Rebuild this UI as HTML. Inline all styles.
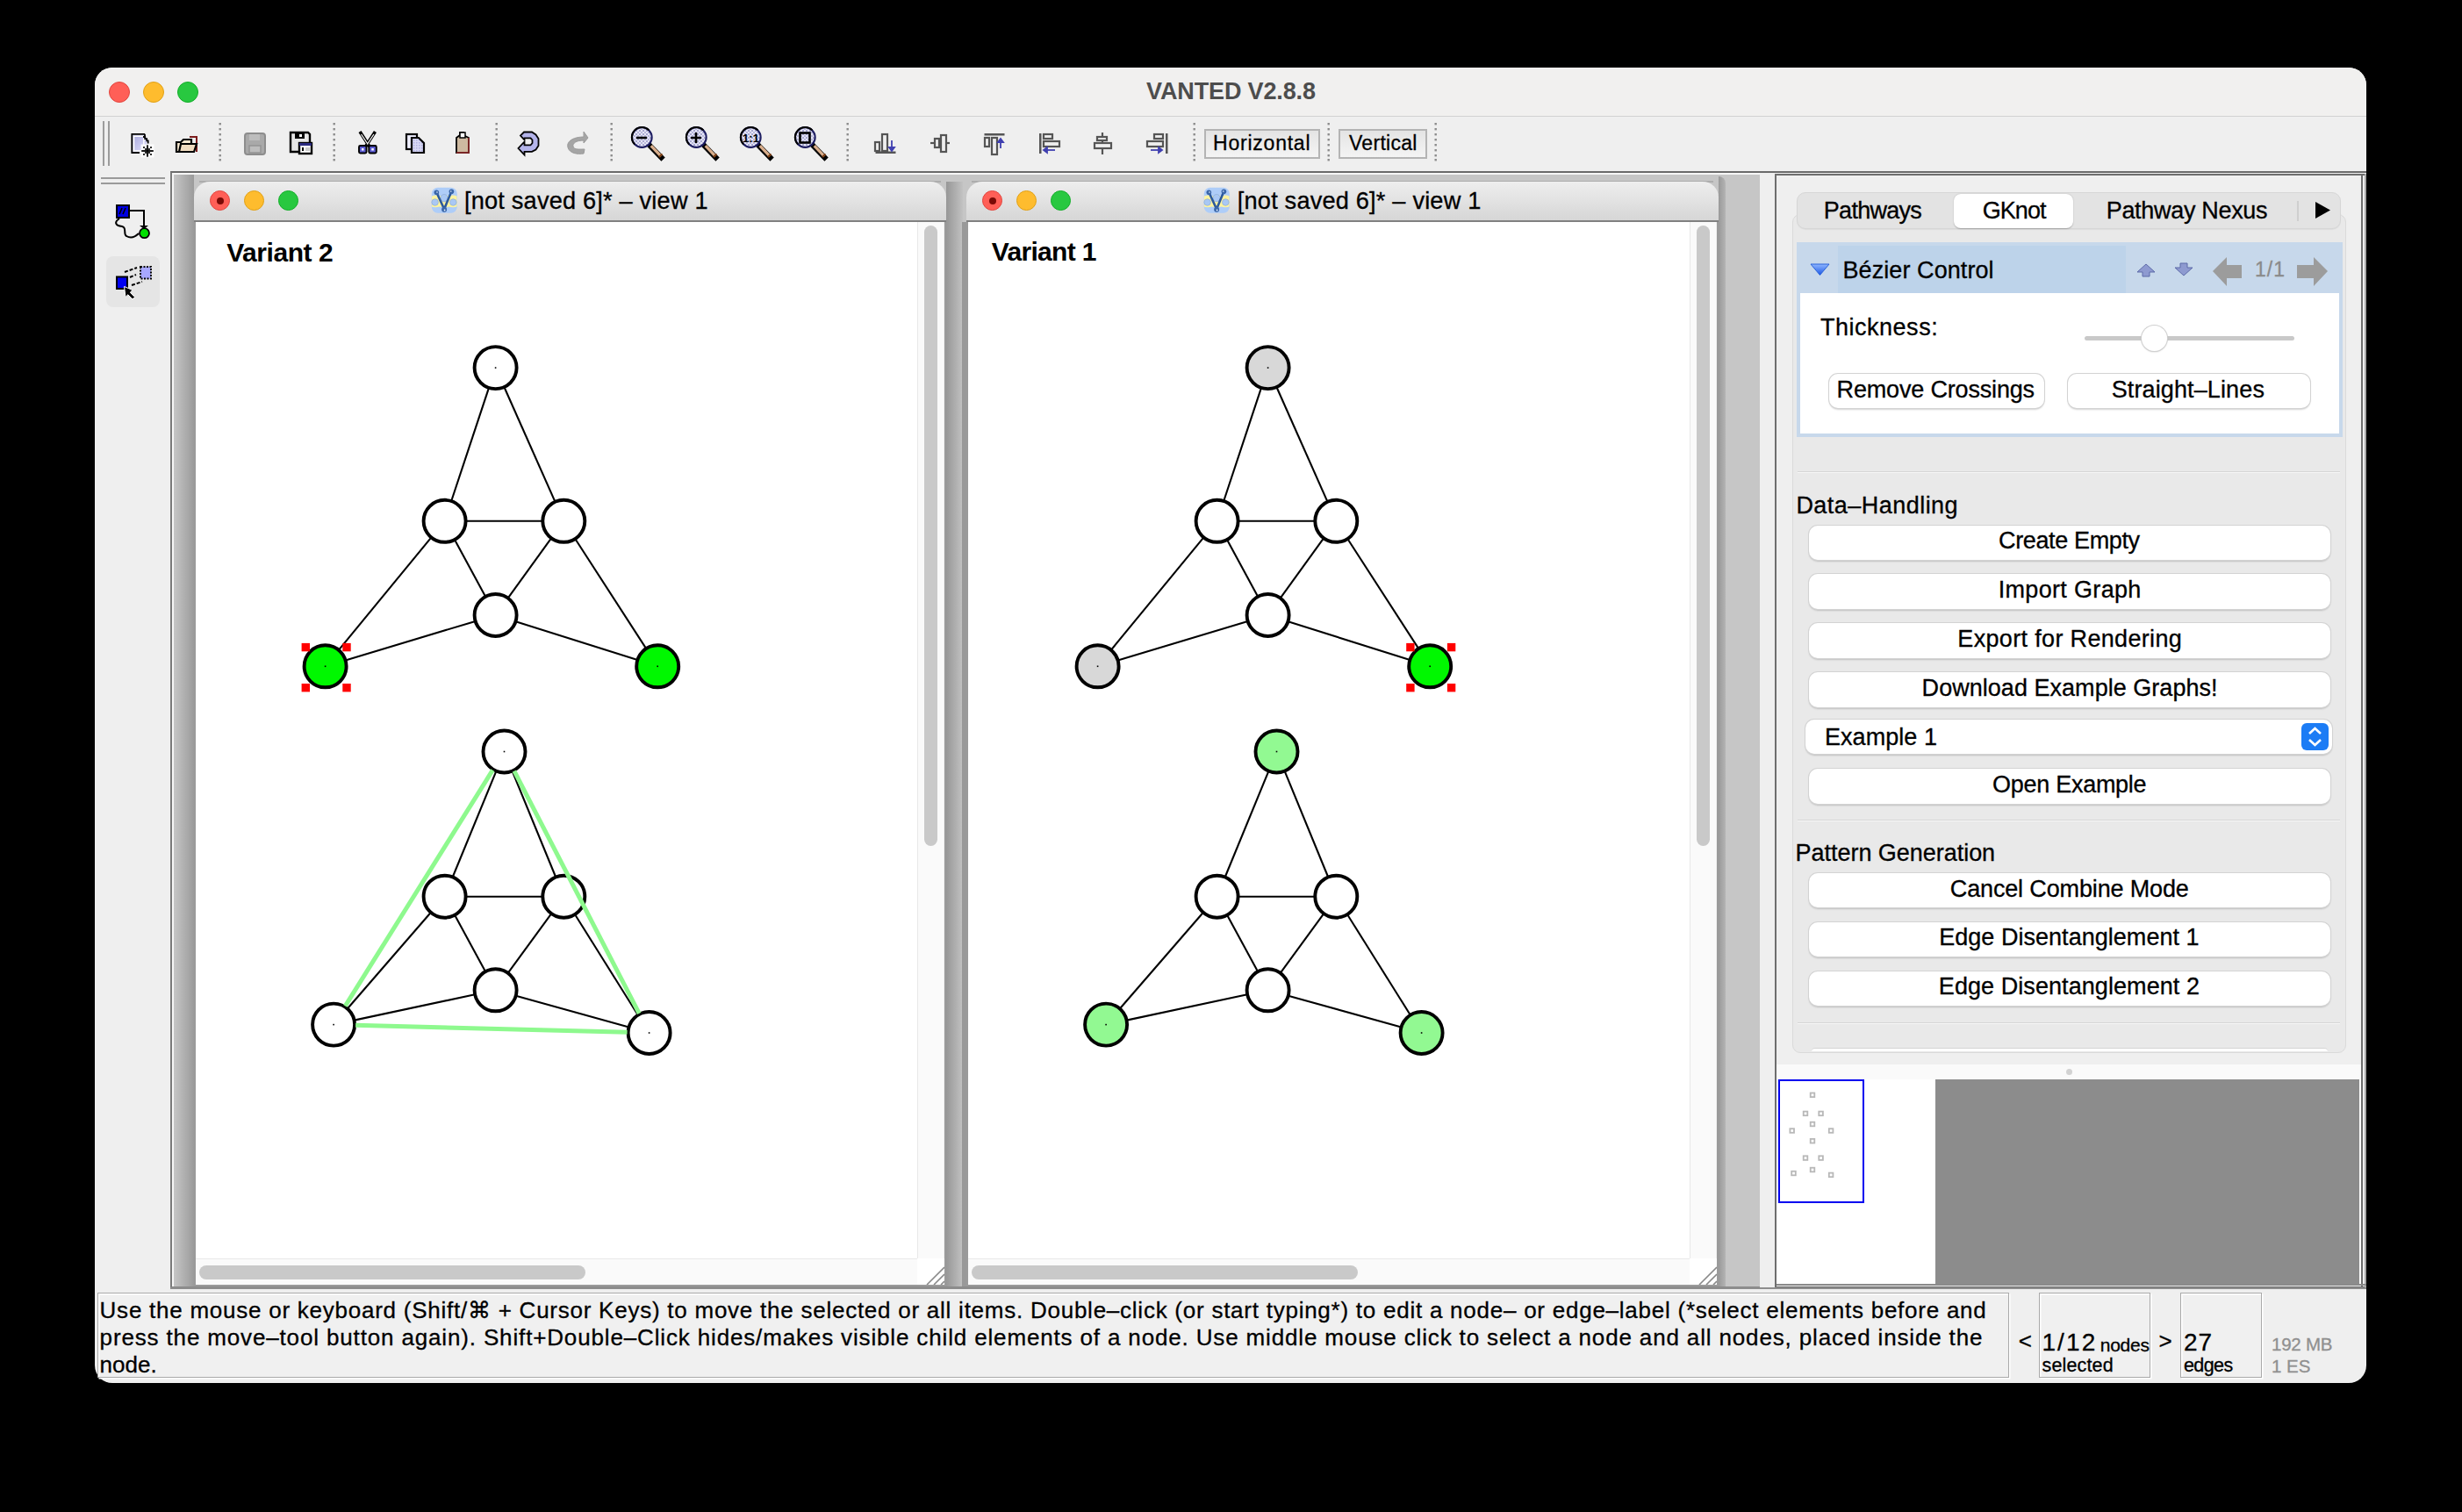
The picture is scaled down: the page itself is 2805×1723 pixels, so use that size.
<!DOCTYPE html>
<html><head><meta charset="utf-8">
<style>
*{box-sizing:border-box}
html,body{margin:0;padding:0}
body{width:2805px;height:1723px;background:#000;position:relative;overflow:hidden;font-family:"Liberation Sans",sans-serif;color:#000}
.a{position:absolute}
.t{position:absolute;white-space:pre;line-height:1}
#win{left:108px;top:77px;width:2588px;height:1499px;background:#efefef;border-radius:20px;overflow:hidden}
.tl{position:absolute;width:24px;height:24px;border-radius:50%}
.red{background:#ff5f57;border:1px solid #e2463f}
.yel{background:#febc2e;border:1px solid #e1a116}
.grn{background:#28c840;border:1px solid #14ae2a}
.sep{position:absolute;width:3px;border-left:3px dotted #8a8a8a}
.frame{position:absolute;background:#fff;border:2px solid #9a9a9a;border-top:none}
.ftitle{position:absolute;left:-2px;right:-2px;top:-46px;height:46px;border-radius:12px 12px 0 0;background:linear-gradient(#efefef,#d6d6d6);border-bottom:2px solid #7f7f7f;border-top:1px solid #c9c9c9}
.btn{position:absolute;background:#fff;border-radius:10px;box-shadow:0 0 0 1px #d3d3d3,0 1.5px 2px rgba(0,0,0,.18);text-align:center;font-size:25px;line-height:38px;white-space:pre}
.hsep{position:absolute;height:2px;background:#d6d6d6;border-bottom:1px solid #f6f6f6}
</style></head><body>
<div id="win" class="a"></div>
<!-- title bar -->
<div class="a" style="left:108px;top:77px;width:2588px;height:56px;background:#f1f0ef;border-radius:20px 20px 0 0;border-bottom:1px solid #d2d2d2"></div>
<div class="tl red" style="left:124px;top:93px"></div>
<div class="tl yel" style="left:163px;top:93px"></div>
<div class="tl grn" style="left:202px;top:93px"></div>


<!-- toolbar -->
<div class="a" style="left:117px;top:138px;width:2px;height:51px;background:#9c9c9c"></div>
<div class="a" style="left:123px;top:138px;width:2px;height:51px;background:#9c9c9c"></div>
<svg class="a" style="left:130px;top:135px" width="1530" height="60" viewBox="130 135 1530 60">
 <g fill="#8c8c8c">
  <rect x="249.5" y="140" width="2.4" height="2.4"/><rect x="249.5" y="146" width="2.4" height="2.4"/><rect x="249.5" y="152" width="2.4" height="2.4"/><rect x="249.5" y="158" width="2.4" height="2.4"/><rect x="249.5" y="164" width="2.4" height="2.4"/><rect x="249.5" y="170" width="2.4" height="2.4"/><rect x="249.5" y="176" width="2.4" height="2.4"/><rect x="249.5" y="181" width="2.4" height="2.4"/>
 </g>
 <use href="#dsep" x="130"/><use href="#dsep" x="315"/><use href="#dsep" x="446"/><use href="#dsep" x="715"/><use href="#dsep" x="1110"/><use href="#dsep" x="1263"/><use href="#dsep" x="1385"/>
 <defs>
  <g id="dsep" fill="#8c8c8c"><rect x="249.5" y="140" width="2.4" height="2.4"/><rect x="249.5" y="146" width="2.4" height="2.4"/><rect x="249.5" y="152" width="2.4" height="2.4"/><rect x="249.5" y="158" width="2.4" height="2.4"/><rect x="249.5" y="164" width="2.4" height="2.4"/><rect x="249.5" y="170" width="2.4" height="2.4"/><rect x="249.5" y="176" width="2.4" height="2.4"/><rect x="249.5" y="181" width="2.4" height="2.4"/></g>
  <pattern id="chk" width="3" height="3" patternUnits="userSpaceOnUse"><rect width="3" height="3" fill="#d8d8f4"/><rect width="1.5" height="1.5" fill="#b0b0e0"/></pattern>
 </defs>
 <!-- new -->
 <defs><linearGradient id="lav" x1="0" y1="0" x2="1" y2="1"><stop offset="0" stop-color="#a8a8dc"/><stop offset="1" stop-color="#e4e4ff"/></linearGradient></defs>
 <path d="M151.5 154H164.5L167.2 157.5V173H151.5Z" fill="url(#lav)"/>
 <path d="M152.6 155.2H163.8V172H152.6Z" fill="none" stroke="#fff" stroke-width="1.4"/>
 <path d="M159 174H150.3V152.8H165M165 152.8V156M163 156h2.2v2.2h2v2.2h1.5v3" fill="none" stroke="#000" stroke-width="1.8"/>
 <rect x="160.5" y="164.5" width="15" height="15" fill="#fff" opacity="0.9"/>
 <g fill="#000"><rect x="167.1" y="165.3" width="1.8" height="13.4"/><rect x="161.2" y="171.1" width="13.6" height="1.8"/>
 <rect x="163.1" y="167.1" width="1.8" height="1.8"/><rect x="171.1" y="167.1" width="1.8" height="1.8"/><rect x="163.1" y="175.1" width="1.8" height="1.8"/><rect x="171.1" y="175.1" width="1.8" height="1.8"/>
 <rect x="165.1" y="169.1" width="1.8" height="1.8"/><rect x="169.1" y="169.1" width="1.8" height="1.8"/><rect x="165.1" y="173.1" width="1.8" height="1.8"/><rect x="169.1" y="173.1" width="1.8" height="1.8"/></g>
 <!-- open -->
 <path d="M201 162h5l3-3h9v14h-17z" fill="#f6e8d0" stroke="#000" stroke-width="2.2"/>
 <path d="M216 156h8v17" fill="none" stroke="#7b1c1c" stroke-width="2"/>
 <path d="M206 164h18l-3 9h-17z" fill="#f0dcc0" stroke="#000" stroke-width="2.2"/>
 <!-- save disabled -->
 <rect x="279" y="152" width="23" height="24" rx="3" fill="#a9a9a9" stroke="#8d8d8d" stroke-width="2"/>
 <rect x="284" y="153" width="12" height="7" fill="#bdbdbd"/><rect x="284" y="166" width="13" height="8" fill="#bdbdbd" stroke="#949494" stroke-width="1.5"/>
 <!-- save as -->
 <path d="M331 151h20l2 2v20h-22z" fill="#e6e6e6" stroke="#000" stroke-width="2.4"/>
 <rect x="336" y="152" width="11" height="6" fill="#000"/><rect x="341" y="153" width="3" height="3" fill="#fff"/>
 <rect x="341" y="163" width="14" height="12" fill="#fff" stroke="#000" stroke-width="2.4"/>
 <rect x="341" y="163" width="14" height="3" fill="#2a2a80"/><rect x="344" y="168" width="2" height="4" fill="#000"/><rect x="348" y="168" width="5" height="4" fill="#ccc"/>
 <!-- cut -->
 <path d="M411 151.5l9 14M426.5 151.5l-9 14" stroke="#000" stroke-width="3.6" stroke-linecap="square"/><path d="M411.6 153l7.6 11.5M425.9 153l-7.6 11.5" stroke="#fff" stroke-width="1.2"/>
 <rect x="409" y="166" width="8.5" height="8.5" rx="1.5" fill="#5a5ad0" stroke="#000" stroke-width="1.9"/><rect x="412" y="169" width="2.5" height="2.5" fill="#fff"/>
 <rect x="420.3" y="166" width="8.5" height="8.5" rx="1.5" fill="#5a5ad0" stroke="#000" stroke-width="1.9"/><rect x="423.3" y="169" width="2.5" height="2.5" fill="#fff"/>
 <!-- copy -->
 <rect x="463" y="153" width="12" height="17" fill="#eef" stroke="#000" stroke-width="2.2"/>
 <path d="M469 157h8l6 6v11h-14z" fill="url(#chk)" stroke="#000" stroke-width="2.2"/>
 <!-- paste -->
 <path d="M520 157l4-3v-3h4v3l6 3v17h-14z" fill="#cdb9a0" stroke="#000" stroke-width="1.8"/>
 <path d="M534 157v17h-14" fill="none" stroke="#7a2626" stroke-width="2"/>
 <rect x="524" y="151" width="6" height="6" fill="#fff" stroke="#000" stroke-width="1.5"/>
 <!-- undo -->
 <path d="M597 150.5H606L610.5 153.5L613.5 158V166L610.5 170.5L606 172.8H597.5V176.5L590.5 169L597.5 161.5V165.3H604.5L606.5 163V159.5L604.5 157.3H597.5V159.5L593 154.5L597 150.5Z" fill="#b4b4ea" stroke="#000" stroke-width="1.8" stroke-linejoin="miter"/>
 <!-- redo disabled -->
 <path d="M665 150l5 7l-5 6v-3c-8 0-13 3-12 7c1 4 8 3 13 3l-1 5c-7 1-16 0-18-7c-2-8 8-12 18-12z" fill="#a5a5a5" stroke="#9a9a9a" stroke-width="1"/>
 <!-- zoom icons -->
 <defs><pattern id="mchk" width="4" height="4" patternUnits="userSpaceOnUse"><rect width="4" height="4" fill="#e6e6f6"/><rect width="2" height="2" fill="#a8a8d0"/><rect x="2" y="2" width="2" height="2" fill="#b8b8dc"/></pattern></defs>
 <g id="mag">
  <path d="M741 166.5L753.5 179.5" stroke="#000" stroke-width="6" stroke-linecap="square"/><path d="M741.8 166.2L753.2 178.2" stroke="#d9ae8c" stroke-width="3.4"/><path d="M751 179l3.5-3.5" stroke="#7a3c10" stroke-width="2.2"/>
  <circle cx="731.3" cy="156.5" r="11.4" fill="url(#mchk)" stroke="#1c1c60" stroke-width="2"/>
  <path d="M723.2 164.6A11.4 11.4 0 0 1 739.4 148.4" fill="none" stroke="#000" stroke-width="2"/>
 </g>
 <path d="M725 157h12" stroke="#000" stroke-width="2.6"/>
 <use href="#mag" x="62"/><path d="M787 157h12M793 151v12" stroke="#000" stroke-width="2.6"/>
 <use href="#mag" x="124"/><text x="855.5" y="162" font-size="13" font-weight="bold" text-anchor="middle" font-family="Liberation Sans">1:1</text>
 <use href="#mag" x="186"/><rect x="911.5" y="151.5" width="11" height="11" fill="none" stroke="#000" stroke-width="2.6"/>
 <!-- align icons -->
 <g fill="none" stroke="#555" stroke-width="2.2">
  <rect x="997" y="162" width="5" height="10"/><rect x="1005" y="153" width="6" height="19"/>
  <rect x="997.5" y="172.5" width="23" height="2.5" fill="#555" stroke="none"/>
  <path d="M1060 163h22"/><rect x="1065" y="158" width="5" height="10" fill="#efefef"/><rect x="1072" y="154" width="6" height="19" fill="#efefef"/>
  <rect x="1121.5" y="152" width="23" height="2.5" fill="#555" stroke="none"/><rect x="1122" y="157" width="5" height="10"/><rect x="1130" y="157" width="6" height="19"/>
  <rect x="1184" y="152" width="2.5" height="23" fill="#555" stroke="none"/><rect x="1189" y="153" width="10" height="5"/><rect x="1189" y="161" width="18" height="6"/>
  <path d="M1256 151v25"/><rect x="1250" y="156" width="11" height="4" fill="#efefef"/><rect x="1247" y="163" width="19" height="6" fill="#efefef"/>
  <rect x="1328" y="152" width="2.5" height="23" fill="#555" stroke="none"/><rect x="1315" y="153" width="10" height="5"/><rect x="1307" y="161" width="18" height="6"/>
 </g>
 <g stroke="#4040b0" stroke-width="1.8" fill="#4040b0">
  <path d="M1016 160v11"/><path d="M1013 168l3 4l3-4z"/>
  <path d="M1140 158v11"/><path d="M1137 162l3-4l3 4z"/>
  <path d="M1190 171h12"/><path d="M1193 168l-4 3l4 3z"/>
  <path d="M1311 171h12"/><path d="M1320 168l4 3l-4 3z"/>
 </g>
</svg>
<div class="a" style="left:1372px;top:147px;width:132px;height:34px;border:2px solid #b4b4b4;background:linear-gradient(#e4e4e4,#f4f4f4)"></div>
<div class="a" style="left:1525px;top:147px;width:101px;height:34px;border:2px solid #b4b4b4;background:linear-gradient(#e4e4e4,#f4f4f4)"></div>

<!-- desktop pane -->
<div class="a" style="left:194px;top:195px;width:1811px;height:1273px;background:#c6c6c6;border-top:2px solid #6b6b6b;border-left:2px solid #7a7a7a;border-bottom:2px solid #8a8a8a"></div>


<!-- left palette -->
<div class="a" style="left:115px;top:202px;width:73px;height:2px;background:#9a9a9a"></div>
<div class="a" style="left:115px;top:208px;width:73px;height:2px;background:#9a9a9a"></div>
<div class="a" style="left:121px;top:292px;width:61px;height:58px;border-radius:8px;background:#e5e5e5"></div>
<svg class="a" style="left:120px;top:225px" width="70" height="130" viewBox="120 225 70 130">
 <rect x="133" y="234" width="14" height="14" fill="#0000e0" stroke="#000" stroke-width="2"/>
 <path d="M136 244l3-7M140 244l3-7" stroke="#000" stroke-width="1.5"/>
 <path d="M147 240h17v20" fill="none" stroke="#000" stroke-width="2"/>
 <path d="M159 257h10l-5 4z" fill="#000"/>
 <path d="M136 249c-6 4-5 8 3 9c6 1 1 9 5 11c5 3 10 1 14-3" fill="none" stroke="#000" stroke-width="2"/>
 <circle cx="164.5" cy="265.7" r="5.5" fill="#00e000" stroke="#000" stroke-width="1.8"/>
 <rect x="133" y="315.5" width="12" height="13.5" fill="#0000f0" stroke="#000" stroke-width="2"/>
 <rect x="160" y="304" width="12" height="13.5" fill="#a8a8ff" stroke="#000" stroke-width="2" stroke-dasharray="2 1.5"/>
 <path d="M142 310l14-5M148 316l7-3M150 325l12-4" stroke="#000" stroke-width="2" stroke-dasharray="4 2"/>
 <path d="M141.5 326.5L151 330.5L148.3 333.2L153.5 338.5L151 341L145.8 335.8L143 338.5Z" fill="#000" stroke="#fff" stroke-width="1"/>
</svg>

<!-- desktop shadows -->
<div class="a" style="left:196px;top:197px;width:1809px;height:1269px;background:#c6c6c6;border-top:2px solid #f6f6f6;border-left:2px solid #f6f6f6"></div>
<div class="a" style="left:198px;top:199px;width:23px;height:1267px;background:linear-gradient(to right,rgba(0,0,0,0),rgba(0,0,0,.22))"></div>
<div class="a" style="left:227px;top:206px;width:845px;height:2px;background:#adadad"></div><div class="a" style="left:1107px;top:206px;width:845px;height:2px;background:#adadad"></div>
<div class="a" style="left:1078px;top:207px;width:19px;height:1259px;background:linear-gradient(to right,#979797,#c2c2c2)"></div>
<div class="a" style="left:1096px;top:253px;width:7px;height:1213px;background:#999"></div>
<div class="a" style="left:1958px;top:201px;width:8px;height:1265px;background:linear-gradient(to right,#999,#b4b4b4);border-radius:0 8px 0 0"></div>

<!-- frame 1 -->
<div class="frame" style="left:221px;top:253px;width:857px;height:1213px"></div>
<div class="a" style="left:221px;top:207px;width:857px;height:46px;border-radius:18px 18px 0 0;background:linear-gradient(#eeeeee,#d6d6d6);border-bottom:2px solid #808080"></div>
<div class="tl red" style="left:239px;top:217px;width:23px;height:23px"><div class="a" style="left:6.5px;top:6.5px;width:8px;height:8px;border-radius:50%;background:#7a0a06"></div></div>
<div class="tl yel" style="left:278px;top:217px;width:23px;height:23px"></div>
<div class="tl grn" style="left:317px;top:217px;width:23px;height:23px"></div>
<!-- frame 2 -->
<div class="frame" style="left:1101px;top:253px;width:857px;height:1213px"></div>
<div class="a" style="left:1101px;top:207px;width:857px;height:46px;border-radius:18px 18px 0 0;background:linear-gradient(#eeeeee,#d6d6d6);border-bottom:2px solid #808080"></div>
<div class="tl red" style="left:1119px;top:217px;width:23px;height:23px"><div class="a" style="left:6.5px;top:6.5px;width:8px;height:8px;border-radius:50%;background:#7a0a06"></div></div>
<div class="tl yel" style="left:1158px;top:217px;width:23px;height:23px"></div>
<div class="tl grn" style="left:1197px;top:217px;width:23px;height:23px"></div>

<!-- title texts + icons -->
<svg class="a" style="left:491px;top:213px" width="30" height="30" viewBox="0 0 30 30" id="vicon">
 <rect x="0.8" y="0.8" width="29" height="29" rx="7" fill="#aecdf8"/>
 <path d="M1 10.5c4-1.5 7-1 9 0c3-1.5 8-1.5 11 0c2-1 5.5-1.5 8.5 0v12c-3 1-6 1-9 0c-3 1-8 1-11 0c-3 1-6 1-8.5 0z" fill="#fdf4a0"/>
 <circle cx="15.1" cy="12.7" r="4.2" fill="#a9c8f4" stroke="#8aa8d0" stroke-width="0.6"/>
 <circle cx="4.6" cy="17.5" r="3.8" fill="#a9c8f4" stroke="#8aa8d0" stroke-width="0.6"/>
 <circle cx="25.3" cy="17.5" r="3.8" fill="#a9c8f4" stroke="#8aa8d0" stroke-width="0.6"/>
 <path d="M6.5 6.5L15.1 25.3L23.3 5.2" fill="none" stroke="#2c5a9c" stroke-width="2.6"/>
 <circle cx="6.3" cy="6.3" r="2.8" fill="#3a66a8"/><circle cx="23.4" cy="5.2" r="2.8" fill="#3a66a8"/><circle cx="15.1" cy="25.8" r="3" fill="#3a66a8"/>
 <circle cx="7" cy="6" r="0.8" fill="#e8f4ff"/><circle cx="22.8" cy="5" r="0.8" fill="#e8f4ff"/><circle cx="15.6" cy="26.5" r="0.9" fill="#e8f4ff"/>
</svg>
<svg class="a" style="left:1371px;top:213px" width="30" height="30" viewBox="0 0 30 30">
 <rect x="0.8" y="0.8" width="29" height="29" rx="7" fill="#aecdf8"/>
 <path d="M1 10.5c4-1.5 7-1 9 0c3-1.5 8-1.5 11 0c2-1 5.5-1.5 8.5 0v12c-3 1-6 1-9 0c-3 1-8 1-11 0c-3 1-6 1-8.5 0z" fill="#fdf4a0"/>
 <circle cx="15.1" cy="12.7" r="4.2" fill="#a9c8f4" stroke="#8aa8d0" stroke-width="0.6"/>
 <circle cx="4.6" cy="17.5" r="3.8" fill="#a9c8f4" stroke="#8aa8d0" stroke-width="0.6"/>
 <circle cx="25.3" cy="17.5" r="3.8" fill="#a9c8f4" stroke="#8aa8d0" stroke-width="0.6"/>
 <path d="M6.5 6.5L15.1 25.3L23.3 5.2" fill="none" stroke="#2c5a9c" stroke-width="2.6"/>
 <circle cx="6.3" cy="6.3" r="2.8" fill="#3a66a8"/><circle cx="23.4" cy="5.2" r="2.8" fill="#3a66a8"/><circle cx="15.1" cy="25.8" r="3" fill="#3a66a8"/>
 <circle cx="7" cy="6" r="0.8" fill="#e8f4ff"/><circle cx="22.8" cy="5" r="0.8" fill="#e8f4ff"/><circle cx="15.6" cy="26.5" r="0.9" fill="#e8f4ff"/>
</svg>

<!-- scrollbars frame 1 -->
<div class="a" style="left:1045px;top:253px;width:31px;height:1181px;background:#fafafa;border-left:1px solid #e8e8e8;border-right:1px solid #f0f0f0"></div>
<div class="a" style="left:1053px;top:257px;width:15px;height:707px;border-radius:8px;background:#c9c9c9"></div>
<div class="a" style="left:223px;top:1434px;width:822px;height:30px;background:#fafafa;border-top:1px solid #e8e8e8"></div>
<div class="a" style="left:227px;top:1442px;width:440px;height:16px;border-radius:8px;background:#c9c9c9"></div>
<div class="a" style="left:1045px;top:1434px;width:31px;height:30px;background:#fff"></div>
<svg class="a" style="left:1045px;top:1434px" width="31" height="30" viewBox="0 0 31 30"><path d="M11 30L31 10M19 30L31 18M27 30L31 26" stroke="#8a8a8a" stroke-width="1.6"/></svg>
<!-- scrollbars frame 2 -->
<div class="a" style="left:1925px;top:253px;width:31px;height:1181px;background:#fafafa;border-left:1px solid #e8e8e8;border-right:1px solid #f0f0f0"></div>
<div class="a" style="left:1933px;top:257px;width:15px;height:707px;border-radius:8px;background:#c9c9c9"></div>
<div class="a" style="left:1103px;top:1434px;width:822px;height:30px;background:#fafafa;border-top:1px solid #e8e8e8"></div>
<div class="a" style="left:1107px;top:1442px;width:440px;height:16px;border-radius:8px;background:#c9c9c9"></div>
<div class="a" style="left:1925px;top:1434px;width:31px;height:30px;background:#fff"></div>
<svg class="a" style="left:1925px;top:1434px" width="31" height="30" viewBox="0 0 31 30"><path d="M11 30L31 10M19 30L31 18M27 30L31 26" stroke="#8a8a8a" stroke-width="1.6"/></svg>

<!-- graphs -->
<svg class="a" style="left:300px;top:380px" width="1500" height="850" viewBox="300 380 1500 850">
<line x1="557.0" y1="441.9" x2="514.2" y2="571.0" stroke="#000" stroke-width="2.1"/>
<line x1="574.4" y1="441.0" x2="632.5" y2="571.9" stroke="#000" stroke-width="2.1"/>
<line x1="530.6" y1="593.8" x2="618.3" y2="593.8" stroke="#000" stroke-width="2.1"/>
<line x1="518.0" y1="614.9" x2="553.2" y2="679.9" stroke="#000" stroke-width="2.1"/>
<line x1="628.2" y1="613.2" x2="578.7" y2="681.6" stroke="#000" stroke-width="2.1"/>
<line x1="491.4" y1="612.3" x2="385.8" y2="740.8" stroke="#000" stroke-width="2.1"/>
<line x1="655.3" y1="614.0" x2="736.2" y2="739.1" stroke="#000" stroke-width="2.1"/>
<line x1="541.6" y1="707.9" x2="393.6" y2="752.4" stroke="#000" stroke-width="2.1"/>
<line x1="587.5" y1="708.2" x2="726.3" y2="752.1" stroke="#000" stroke-width="2.1"/>
<circle cx="564.6" cy="419.1" r="24" fill="#fff" stroke="#000" stroke-width="3.9"/>
<rect x="563.8" y="418.3" width="1.6" height="1.6" fill="#000"/>
<circle cx="506.6" cy="593.8" r="24" fill="#fff" stroke="#000" stroke-width="3.9"/>
<circle cx="642.3" cy="593.8" r="24" fill="#fff" stroke="#000" stroke-width="3.9"/>
<circle cx="564.6" cy="701.0" r="24" fill="#fff" stroke="#000" stroke-width="3.9"/>
<circle cx="370.6" cy="759.3" r="24" fill="#00f800" stroke="#000" stroke-width="3.9"/>
<rect x="369.8" y="758.5" width="1.6" height="1.6" fill="#000"/>
<circle cx="749.2" cy="759.3" r="24" fill="#00f800" stroke="#000" stroke-width="3.9"/>
<rect x="748.4" y="758.5" width="1.6" height="1.6" fill="#000"/>
<rect x="343.6" y="732.9" width="9.4" height="9.4" fill="#f00"/>
<rect x="343.6" y="779.0" width="9.4" height="9.4" fill="#f00"/>
<rect x="390.3" y="732.9" width="9.4" height="9.4" fill="#f00"/>
<rect x="390.3" y="779.0" width="9.4" height="9.4" fill="#f00"/>
<line x1="565.4" y1="878.7" x2="515.7" y2="999.5" stroke="#000" stroke-width="2.1"/>
<line x1="583.6" y1="878.7" x2="633.2" y2="999.5" stroke="#000" stroke-width="2.1"/>
<line x1="530.6" y1="1021.7" x2="618.3" y2="1021.7" stroke="#000" stroke-width="2.1"/>
<line x1="518.1" y1="1042.8" x2="553.1" y2="1107.2" stroke="#000" stroke-width="2.1"/>
<line x1="628.2" y1="1041.1" x2="578.7" y2="1108.9" stroke="#000" stroke-width="2.1"/>
<line x1="490.9" y1="1039.8" x2="395.8" y2="1149.5" stroke="#000" stroke-width="2.1"/>
<line x1="655.0" y1="1042.0" x2="726.9" y2="1156.7" stroke="#000" stroke-width="2.1"/>
<line x1="541.1" y1="1133.3" x2="403.6" y2="1162.6" stroke="#000" stroke-width="2.1"/>
<line x1="587.7" y1="1134.7" x2="716.5" y2="1170.6" stroke="#000" stroke-width="2.1"/>
<circle cx="574.5" cy="856.5" r="24" fill="#fff" stroke="#000" stroke-width="3.9"/>
<rect x="573.7" y="855.7" width="1.6" height="1.6" fill="#000"/>
<circle cx="506.6" cy="1021.7" r="24" fill="#fff" stroke="#000" stroke-width="3.9"/>
<circle cx="642.3" cy="1021.7" r="24" fill="#fff" stroke="#000" stroke-width="3.9"/>
<circle cx="564.6" cy="1128.3" r="24" fill="#fff" stroke="#000" stroke-width="3.9"/>
<circle cx="380.1" cy="1167.6" r="24" fill="#fff" stroke="#000" stroke-width="3.9"/>
<rect x="379.3" y="1166.8" width="1.6" height="1.6" fill="#000"/>
<circle cx="739.6" cy="1177.0" r="24" fill="#fff" stroke="#000" stroke-width="3.9"/>
<rect x="738.8" y="1176.2" width="1.6" height="1.6" fill="#000"/>
<line x1="561.3" y1="877.7" x2="393.3" y2="1146.4" stroke="#8ef98e" stroke-width="5"/>
<line x1="585.9" y1="878.7" x2="728.2" y2="1154.8" stroke="#8ef98e" stroke-width="5"/>
<line x1="405.1" y1="1168.3" x2="714.6" y2="1176.3" stroke="#8ef98e" stroke-width="5"/>
<line x1="1437.0" y1="441.9" x2="1394.2" y2="571.0" stroke="#000" stroke-width="2.1"/>
<line x1="1454.4" y1="441.0" x2="1512.5" y2="571.9" stroke="#000" stroke-width="2.1"/>
<line x1="1410.6" y1="593.8" x2="1498.3" y2="593.8" stroke="#000" stroke-width="2.1"/>
<line x1="1398.0" y1="614.9" x2="1433.2" y2="679.9" stroke="#000" stroke-width="2.1"/>
<line x1="1508.2" y1="613.2" x2="1458.7" y2="681.6" stroke="#000" stroke-width="2.1"/>
<line x1="1371.4" y1="612.3" x2="1265.8" y2="740.8" stroke="#000" stroke-width="2.1"/>
<line x1="1535.3" y1="614.0" x2="1616.2" y2="739.1" stroke="#000" stroke-width="2.1"/>
<line x1="1421.6" y1="707.9" x2="1273.6" y2="752.4" stroke="#000" stroke-width="2.1"/>
<line x1="1467.5" y1="708.2" x2="1606.3" y2="752.1" stroke="#000" stroke-width="2.1"/>
<circle cx="1444.6" cy="419.1" r="24" fill="#d8d8d8" stroke="#000" stroke-width="3.9"/>
<rect x="1443.8" y="418.3" width="1.6" height="1.6" fill="#000"/>
<circle cx="1386.6" cy="593.8" r="24" fill="#fff" stroke="#000" stroke-width="3.9"/>
<circle cx="1522.3" cy="593.8" r="24" fill="#fff" stroke="#000" stroke-width="3.9"/>
<circle cx="1444.6" cy="701.0" r="24" fill="#fff" stroke="#000" stroke-width="3.9"/>
<circle cx="1250.6" cy="759.3" r="24" fill="#d8d8d8" stroke="#000" stroke-width="3.9"/>
<rect x="1249.8" y="758.5" width="1.6" height="1.6" fill="#000"/>
<circle cx="1629.2" cy="759.3" r="24" fill="#00f800" stroke="#000" stroke-width="3.9"/>
<rect x="1628.4" y="758.5" width="1.6" height="1.6" fill="#000"/>
<rect x="1602.2" y="732.9" width="9.4" height="9.4" fill="#f00"/>
<rect x="1602.2" y="779.0" width="9.4" height="9.4" fill="#f00"/>
<rect x="1648.9" y="732.9" width="9.4" height="9.4" fill="#f00"/>
<rect x="1648.9" y="779.0" width="9.4" height="9.4" fill="#f00"/>
<line x1="1445.4" y1="878.7" x2="1395.7" y2="999.5" stroke="#000" stroke-width="2.1"/>
<line x1="1463.6" y1="878.7" x2="1513.2" y2="999.5" stroke="#000" stroke-width="2.1"/>
<line x1="1410.6" y1="1021.7" x2="1498.3" y2="1021.7" stroke="#000" stroke-width="2.1"/>
<line x1="1398.1" y1="1042.8" x2="1433.1" y2="1107.2" stroke="#000" stroke-width="2.1"/>
<line x1="1508.2" y1="1041.1" x2="1458.7" y2="1108.9" stroke="#000" stroke-width="2.1"/>
<line x1="1370.9" y1="1039.8" x2="1275.8" y2="1149.5" stroke="#000" stroke-width="2.1"/>
<line x1="1535.0" y1="1042.0" x2="1606.9" y2="1156.7" stroke="#000" stroke-width="2.1"/>
<line x1="1421.1" y1="1133.3" x2="1283.6" y2="1162.6" stroke="#000" stroke-width="2.1"/>
<line x1="1467.7" y1="1134.7" x2="1596.5" y2="1170.6" stroke="#000" stroke-width="2.1"/>
<circle cx="1454.5" cy="856.5" r="24" fill="#92f992" stroke="#000" stroke-width="3.9"/>
<rect x="1453.7" y="855.7" width="1.6" height="1.6" fill="#000"/>
<circle cx="1386.6" cy="1021.7" r="24" fill="#fff" stroke="#000" stroke-width="3.9"/>
<circle cx="1522.3" cy="1021.7" r="24" fill="#fff" stroke="#000" stroke-width="3.9"/>
<circle cx="1444.6" cy="1128.3" r="24" fill="#fff" stroke="#000" stroke-width="3.9"/>
<circle cx="1260.1" cy="1167.6" r="24" fill="#92f992" stroke="#000" stroke-width="3.9"/>
<rect x="1259.3" y="1166.8" width="1.6" height="1.6" fill="#000"/>
<circle cx="1619.6" cy="1177.0" r="24" fill="#92f992" stroke="#000" stroke-width="3.9"/>
<rect x="1618.8" y="1176.2" width="1.6" height="1.6" fill="#000"/>
</svg>


<!-- top border over right area -->
<div class="a" style="left:1005px;top:195px;width:1691px;height:2px;background:#6b6b6b"></div>
<!-- right panel -->
<div class="a" style="left:2022px;top:198px;width:674px;height:1270px;border:2px solid #6e6e6e;border-right:none;background:#efefef"></div>
<div class="a" style="left:2690px;top:198px;width:2px;height:1270px;background:#6e6e6e"></div>
<div class="a" style="left:2694px;top:198px;width:2px;height:1270px;background:#a9a9a9"></div>
<div class="a" style="left:2042px;top:244px;width:631px;height:956px;border-radius:9px;background:#e9e9e9;border:1px solid #dadada"></div>
<div class="a" style="left:2047px;top:219px;width:620px;height:42px;border-radius:10px;background:#e3e3e3;border:1px solid #d6d6d6;box-shadow:0 1px 1px rgba(0,0,0,.05)"></div>
<div class="a" style="left:2226px;top:221px;width:136px;height:39px;border-radius:8px;background:#fff;box-shadow:0 0.5px 1.5px rgba(0,0,0,.25)"></div>
<div class="a" style="left:2617px;top:229px;width:1.5px;height:23px;background:#cfcfcf"></div>
<svg class="a" style="left:2637px;top:229px" width="20" height="22" viewBox="0 0 20 22"><path d="M1 1L18 10.5L1 20z" fill="#000"/></svg>
<div class="a" style="left:2047px;top:276px;width:622px;height:222px;background:#c7d8eb"></div>
<div class="a" style="left:2094px;top:280px;width:328px;height:54px;background:#bdd3ea"></div>
<div class="a" style="left:2051px;top:334px;width:614px;height:160px;background:#fff"></div>
<svg class="a" style="left:2062px;top:300px" width="24" height="15" viewBox="0 0 24 15"><defs><linearGradient id="tg" x1="0" y1="0" x2="0" y2="1"><stop offset="0" stop-color="#8fb6ff"/><stop offset="1" stop-color="#1a56e6"/></linearGradient></defs><path d="M1 1h21L11.5 13.5z" fill="url(#tg)" stroke="#2b63d8" stroke-width="1"/></svg>
<svg class="a" style="left:2430px;top:288px" width="230" height="44" viewBox="2430 288 230 44">
 <path d="M2445 301l-10 9h6v5h8v-5h6z" fill="#8e9ad0" stroke="#5d6aa8" stroke-width="1"/>
 <path d="M2488 314l10-9h-6v-5h-8v5h-6z" fill="#8e9ad0" stroke="#5d6aa8" stroke-width="1"/>
 <path d="M2521 309l16-16v9h17v15h-17v9z" fill="#9c9c9c"/>
 <path d="M2652 309l-16-16v9h-19v15h19v9z" fill="#9c9c9c"/>
</svg>
<!-- slider -->
<div class="a" style="left:2375px;top:383px;width:239px;height:5px;border-radius:3px;background:#c9c9c9"></div>
<div class="a" style="left:2440px;top:371px;width:29px;height:29px;border-radius:50%;background:#fff;box-shadow:0 0 0 1px #d0d0d0,0 1px 2px rgba(0,0,0,.25)"></div>
<div class="btn" style="left:2084px;top:426px;width:245px;height:39px"></div>
<div class="btn" style="left:2356px;top:426px;width:276px;height:39px"></div>
<div class="hsep" style="left:2048px;top:537px;width:618px"></div>
<div class="hsep" style="left:2048px;top:934px;width:618px"></div>
<div class="hsep" style="left:2048px;top:1165px;width:618px"></div>
<div class="a" style="left:2064px;top:1194px;width:588px;height:4px;border-top:1px solid #d4d4d4;border-radius:8px 8px 0 0;background:#fff"></div>

<div class="btn" style="left:2061px;top:598.5px;width:594px;height:39.5px"></div>
<div class="btn" style="left:2061px;top:654.4px;width:594px;height:39.5px"></div>
<div class="btn" style="left:2061px;top:710.3px;width:594px;height:39.5px"></div>
<div class="btn" style="left:2061px;top:766.2px;width:594px;height:39.5px"></div>
<div class="btn" style="left:2061px;top:876.0px;width:594px;height:39.5px"></div>
<div class="btn" style="left:2061px;top:994.9px;width:594px;height:39.5px"></div>
<div class="btn" style="left:2061px;top:1050.8px;width:594px;height:39.5px"></div>
<div class="btn" style="left:2061px;top:1106.7px;width:594px;height:39.5px"></div>

<div class="btn" style="left:2057px;top:820px;width:600px;height:39px"></div>
<svg class="a" style="left:2622px;top:824px" width="31" height="31" viewBox="0 0 31 31"><rect width="31" height="31" rx="6" fill="#1c7cf5"/><path d="M9 12l6.5-6l6.5 6M9 19l6.5 6l6.5-6" fill="none" stroke="#fff" stroke-width="2.6"/></svg>
<!-- split divider + overview -->
<div class="a" style="left:2024px;top:1213px;width:666px;height:17px;background:#fafafa"></div>
<div class="a" style="left:2354px;top:1218px;width:7px;height:7px;border-radius:50%;background:#d2d2d2"></div>
<div class="a" style="left:2024px;top:1230px;width:666px;height:235px;background:#fff"></div>
<div class="a" style="left:2205px;top:1230px;width:483px;height:235px;background:#8c8c8c"></div>
<div class="a" style="left:2026px;top:1230px;width:98px;height:141px;border:2px solid #0000f0"></div>
<svg class="a" style="left:2030px;top:1240px" width="70" height="110" viewBox="2030 1240 70 110"><g fill="none" stroke="#b8b8b8" stroke-width="1.8">

<rect x="2062.7" y="1245.5" width="4.6" height="4.6"/>
<rect x="2054.7" y="1266.6" width="4.6" height="4.6"/>
<rect x="2072.3" y="1266.6" width="4.6" height="4.6"/>
<rect x="2062.7" y="1278.7" width="4.6" height="4.6"/>
<rect x="2039.4" y="1286.2" width="4.6" height="4.6"/>
<rect x="2083.8" y="1286.2" width="4.6" height="4.6"/>
<rect x="2062.7" y="1297.9" width="4.6" height="4.6"/>
<rect x="2054.7" y="1317.3" width="4.6" height="4.6"/>
<rect x="2072.3" y="1317.3" width="4.6" height="4.6"/>
<rect x="2062.7" y="1330.7" width="4.6" height="4.6"/>
<rect x="2041.2" y="1334.7" width="4.6" height="4.6"/>
<rect x="2083.8" y="1336.6" width="4.6" height="4.6"/>
</g></svg>
<div class="a" style="left:2024px;top:1463px;width:672px;height:2px;background:#8a8a8a"></div>
<!-- desktop bottom & status bar -->
<div class="a" style="left:194px;top:1467.4px;width:2502px;height:1.8px;background:#8d8d8d"></div>
<div class="a" style="left:111px;top:1473px;width:2178px;height:97px;border:1.6px solid #a9a9a9;background:#f0f0f0;box-shadow:inset 1.5px 1.5px 0 #fff,1.5px 1.5px 0 #fff"></div>
<div class="a" style="left:2323px;top:1473px;width:127px;height:97px;border:1.6px solid #a9a9a9;background:#f0f0f0;box-shadow:inset 1.5px 1.5px 0 #fff,1.5px 1.5px 0 #fff"></div>
<div class="a" style="left:2484px;top:1473px;width:93px;height:97px;border:1.6px solid #a9a9a9;background:#f0f0f0;box-shadow:inset 1.5px 1.5px 0 #fff,1.5px 1.5px 0 #fff"></div>

<div class="t" style="left:1306.1px;top:91.1px;font-size:27px;font-weight:bold;color:#4d4d4d;letter-spacing:-0.142px">VANTED V2.8.8</div>
<div class="t" style="left:1382.0px;top:152.3px;font-size:23px;font-weight:normal;color:#000;letter-spacing:0.778px;-webkit-text-stroke:0.3px #000">Horizontal</div>
<div class="t" style="left:1537.0px;top:152.3px;font-size:23px;font-weight:normal;color:#000;letter-spacing:0.286px;-webkit-text-stroke:0.3px #000">Vertical</div>
<div class="t" style="left:529.0px;top:215.1px;font-size:27.2px;font-weight:normal;color:#000;letter-spacing:0.182px;-webkit-text-stroke:0.3px #000">[not saved 6]* – view 1</div>
<div class="t" style="left:1409.8px;top:215.1px;font-size:27.2px;font-weight:normal;color:#000;letter-spacing:0.182px;-webkit-text-stroke:0.3px #000">[not saved 6]* – view 1</div>
<div class="t" style="left:258.2px;top:273.2px;font-size:30px;font-weight:bold;color:#000;letter-spacing:-0.438px">Variant 2</div>
<div class="t" style="left:1129.8px;top:271.8px;font-size:30px;font-weight:bold;color:#000;letter-spacing:-0.688px">Variant 1</div>
<div class="t" style="left:2077.8px;top:226.9px;font-size:27px;font-weight:normal;color:#000;letter-spacing:-0.714px;-webkit-text-stroke:0.3px #000">Pathways</div>
<div class="t" style="left:2258.7px;top:226.9px;font-size:27px;font-weight:normal;color:#000;letter-spacing:-0.925px;-webkit-text-stroke:0.3px #000">GKnot</div>
<div class="t" style="left:2399.7px;top:226.9px;font-size:27px;font-weight:normal;color:#000;letter-spacing:-0.308px;-webkit-text-stroke:0.3px #000">Pathway Nexus</div>
<div class="t" style="left:2099.5px;top:295.2px;font-size:27px;font-weight:normal;color:#000;letter-spacing:0.077px;-webkit-text-stroke:0.3px #000">Bézier Control</div>
<div class="t" style="left:2569.0px;top:296.3px;font-size:23px;font-weight:normal;color:#8a8a8a;letter-spacing:1.000px;-webkit-text-stroke:0.3px #8a8a8a">1/1</div>
<div class="t" style="left:2074.0px;top:360.4px;font-size:27px;font-weight:normal;color:#000;letter-spacing:0.511px;-webkit-text-stroke:0.3px #000">Thickness:</div>
<div class="t" style="left:2092.6px;top:430.7px;font-size:27px;font-weight:normal;color:#000;letter-spacing:-0.173px;-webkit-text-stroke:0.3px #000">Remove Crossings</div>
<div class="t" style="left:2405.7px;top:430.7px;font-size:27px;font-weight:normal;color:#000;letter-spacing:0.123px;-webkit-text-stroke:0.3px #000">Straight–Lines</div>
<div class="t" style="left:2046.4px;top:562.6px;font-size:27px;font-weight:normal;color:#000;letter-spacing:0.467px;-webkit-text-stroke:0.3px #000">Data–Handling</div>
<div class="t" style="left:2079.0px;top:826.7px;font-size:27px;font-weight:normal;color:#000;letter-spacing:0.050px;-webkit-text-stroke:0.3px #000">Example 1</div>
<div class="t" style="left:2045.6px;top:958.5px;font-size:27px;font-weight:normal;color:#000;letter-spacing:-0.035px;-webkit-text-stroke:0.3px #000">Pattern Generation</div>
<div class="t" style="left:113.6px;top:1479.8px;font-size:26px;font-weight:normal;color:#000;letter-spacing:0.753px;-webkit-text-stroke:0.3px #000">Use the mouse or keyboard (Shift/⌘ + Cursor Keys) to move the selected or all items. Double–click (or start typing*) to edit a node– or edge–label (*select elements before and</div>
<div class="t" style="left:113.6px;top:1511.1px;font-size:26px;font-weight:normal;color:#000;letter-spacing:0.850px;-webkit-text-stroke:0.3px #000">press the move–tool button again). Shift+Double–Click hides/makes visible child elements of a node. Use middle mouse click to select a node and all nodes, placed inside the</div>
<div class="t" style="left:113.6px;top:1542.1px;font-size:26px;font-weight:normal;color:#000;letter-spacing:0.000px;-webkit-text-stroke:0.3px #000">node.</div>
<div class="t" style="left:2299.8px;top:1514.8px;font-size:26px;font-weight:normal;color:#000;letter-spacing:2.400px;-webkit-text-stroke:0.3px #000">&lt;</div>
<div class="t" style="left:2326.4px;top:1515.8px;font-size:28px;font-weight:normal;color:#000;letter-spacing:2.133px;-webkit-text-stroke:0.3px #000">1/12</div>
<div class="t" style="left:2392.8px;top:1521.6px;font-size:21px;font-weight:normal;color:#000;letter-spacing:-0.275px;-webkit-text-stroke:0.3px #000">nodes</div>
<div class="t" style="left:2326.5px;top:1545.6px;font-size:21.5px;font-weight:normal;color:#000;letter-spacing:0.157px;-webkit-text-stroke:0.3px #000">selected</div>
<div class="t" style="left:2459.6px;top:1514.8px;font-size:26px;font-weight:normal;color:#000;letter-spacing:2.700px;-webkit-text-stroke:0.3px #000">&gt;</div>
<div class="t" style="left:2488.0px;top:1515.8px;font-size:28px;font-weight:normal;color:#000;letter-spacing:1.000px;-webkit-text-stroke:0.3px #000">27</div>
<div class="t" style="left:2488.0px;top:1545.6px;font-size:21.5px;font-weight:normal;color:#000;letter-spacing:-0.600px;-webkit-text-stroke:0.3px #000">edges</div>
<div class="t" style="left:2588.0px;top:1521.5px;font-size:20.5px;font-weight:normal;color:#909090;letter-spacing:-0.240px;-webkit-text-stroke:0.3px #909090">192 MB</div>
<div class="t" style="left:2588.0px;top:1546.5px;font-size:20.5px;font-weight:normal;color:#909090;letter-spacing:0.000px;-webkit-text-stroke:0.3px #909090">1 ES</div>
<div class="t" style="left:2277.0px;top:603.1px;font-size:27px;letter-spacing:-0.36363636363636365px;-webkit-text-stroke:0.3px #000">Create Empty</div>
<div class="t" style="left:2276.7px;top:659.0px;font-size:27px;letter-spacing:0.32727272727272677px;-webkit-text-stroke:0.3px #000">Import Graph</div>
<div class="t" style="left:2230.3px;top:714.9px;font-size:27px;letter-spacing:0.3368421052631582px;-webkit-text-stroke:0.3px #000">Export for Rendering</div>
<div class="t" style="left:2189.6px;top:770.8px;font-size:27px;letter-spacing:0.03478260869565267px;-webkit-text-stroke:0.3px #000">Download Example Graphs!</div>
<div class="t" style="left:2270.0px;top:880.6px;font-size:27px;letter-spacing:-0.2727272727272727px;-webkit-text-stroke:0.3px #000">Open Example</div>
<div class="t" style="left:2221.8px;top:999.5px;font-size:27px;letter-spacing:-0.1444444444444457px;-webkit-text-stroke:0.3px #000">Cancel Combine Mode</div>
<div class="t" style="left:2209.2px;top:1055.4px;font-size:27px;letter-spacing:0.03333333333333279px;-webkit-text-stroke:0.3px #000">Edge Disentanglement 1</div>
<div class="t" style="left:2208.8px;top:1111.3px;font-size:27px;letter-spacing:0.07142857142857142px;-webkit-text-stroke:0.3px #000">Edge Disentanglement 2</div>
</body></html>
